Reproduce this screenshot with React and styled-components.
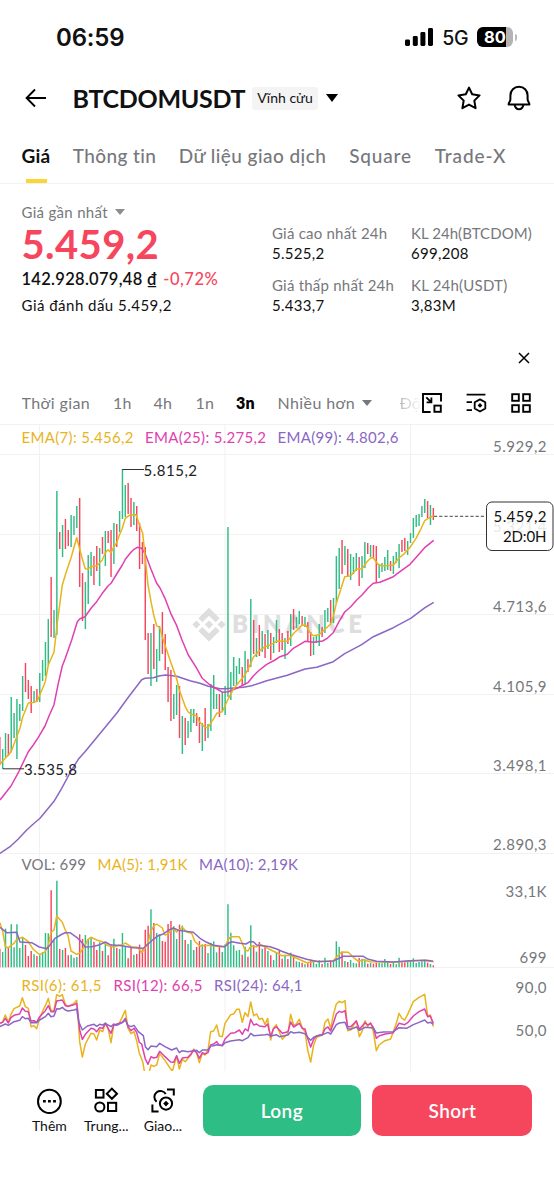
import React, { Component } from 'react'
import styled, { createGlobalStyle } from 'styled-components'

const GREEN = '#2ebd85'
const RED = '#f6465d'
const YELLOW = '#e8b41c'
const PINK = '#e040b0'
const PURPLE = '#8a67c4'

const STEP = 2.852
const FIRST_X = 2.67

// direction, high y, low y; the first candle is cut by the left edge
const CANDLES = `
r737-765 g749-769 g733-757 r734-756 g697-752 g713-738 g699-759 g704-721 g676-711 r663-692
r680-699 r686-713 g691-702 r689-702 g673-702 g660-681 g642-676 g619-665 r577-637 g610-638
g491-635 r532-549 g525-557 r519-549 r530-546 g515-547 g516-535 g506-528 r498-587 r573-621
g582-629 g555-604 g552-576 r556-585 r546-571 g548-586 r537-554 g531-566 r531-543 r530-577
g523-564 r524-547 g511-532 g469-519 g485-517 r483-514 r498-527 g502-525 r506-531 r523-569
r542-564 r547-640 r633-674 g633-686 r624-669 g649-682 g626-661 r612-654 r634-670 r667-702
r670-721 g694-719 g685-715 r686-738 g716-754 r718-745 g721-738 g709-732 g709-723 r713-726
r717-743 g723-751 r708-741 g724-738 g684-731 g675-709 g694-709 r694-717 g692-711 g686-715
g527-697 g672-700 g657-686 g666-685 g658-674 r667-686 g651-685 r659-672 g599-667 r620-654
g638-657 r625-656 g631-652 r634-658 g630-649 r633-660 g637-653 g620-643 r629-652 r633-650
g638-659 r631-644 g614-646 r609-630 g617-628 g611-624 r616-626 g617-627 r622-642 r632-656
g637-655 g635-643 g624-646 r627-637 g610-633 g608-622 r600-623 g598-623 g556-603 g548-589
r540-574 g546-565 r549-577 g554-580 g557-574 g553-571 r557-586 g556-578 g542-568 r543-554
g545-557 r545-558 r546-582 g564-578 g563-572 g557-571 g550-570 r561-571 g556-574 g552-563
g544-568 r540-552 r538-551 g541-555 g533-543 g518-538 g515-527 g514-526 g506-517 g499-513
r501-518 g505-525 r508-520
`.trim().split(/\s+/).map((item, i) => {
  const [high, low] = item.slice(1).split('-').map(Number)
  return { x: FIRST_X + (i - 1) * STEP, color: item[0] === 'g' ? GREEN : RED, high, low }
})

// bar heights in thirds of a pixel
const VOLUMES = [
  56, 46, 116, 60, 129, 60, 129, 58, 90, 67, 34, 49, 39, 34, 36, 46, 103, 102, 231, 82,
  260, 55, 52, 58, 36, 38, 29, 31, 99, 85, 97, 84, 90, 77, 52, 75, 49, 70, 36, 69,
  86, 58, 55, 103, 61, 27, 60, 38, 40, 68, 54, 113, 125, 174, 133, 103, 99, 79, 77, 130,
  139, 123, 85, 128, 125, 82, 70, 82, 52, 61, 79, 69, 70, 43, 74, 78, 45, 62, 46, 69,
  189, 104, 66, 50, 52, 38, 62, 32, 126, 67, 47, 76, 56, 65, 49, 36, 22, 43, 49, 26,
  38, 25, 44, 34, 18, 16, 14, 9, 12, 23, 18, 10, 22, 10, 29, 14, 22, 19, 78, 62,
  47, 19, 16, 22, 13, 12, 28, 26, 24, 11, 13, 11, 14, 13, 12, 25, 16, 10, 14, 9,
  29, 15, 15, 17, 20, 27, 13, 16, 18, 23, 14, 10, 6
]

const EMA7 = '0,764 11,752 16.7,737 20,728 22.7,717 28.3,703 33.3,702.5 37.3,701 45.3,681.7 48.3,665 54,652 57.3,623 62.3,585 66,572.7 71,558 76.7,537.7 81.7,556.7 85.3,568.7 88,569 91,566.7 96.7,565.7 102.3,560 105.3,552.7 108,549.7 111,552.7 113.7,547 116.7,542.7 119.3,535.3 122.3,528.3 125.3,518.3 129.3,515.3 136,514.7 139.3,524.3 142.7,533.3 145.3,558.3 148,585 151,601.7 153.7,615 156.7,625.7 160,628 162.3,636.7 165.3,646 170.7,662 176.7,679 179.3,690 182.3,698.3 185.3,706.7 188,711.7 190.7,714 196.7,716 199.3,721.7 205,727.3 208,727.7 210.7,723.3 213.7,718.7 216.7,713.3 222.3,711.7 228,699.3 233.3,689.3 239.3,681.7 245,675 249.3,666.7 253.3,657.3 258.3,651.7 265,646.7 270.7,645 276.7,641 282,641.3 287.7,641 290.7,637.3 293.7,633.3 299.3,628 302,625 306,625.3 310,632.7 313.3,635.7 319,634.7 325,629.3 330.7,624 333.3,616.7 336.7,601.7 339,595 344.7,576.7 350.7,575.7 356.7,569 362,569 366.7,562 370.7,558 373.3,557.7 377.7,564 382,566 393.3,565.3 399,558 404.7,553.3 410,547.3 416,538.3 420.7,529.3 424.7,520.7 430,517.3 433.7,516'
const EMA25 = '0,800 11,786 18.3,772.7 28.3,751.7 33.3,745 38.3,737.3 45,726 49,716 54,704.7 58.3,683.3 62.3,666 65,659 71.7,640 77.3,621.7 80,618.7 85,616.7 91,608.3 96.7,601.7 102.3,593.3 108,586 111,583.3 116.7,574 122.3,565 125.3,559.3 131,552.3 134,549.3 137.3,547.3 141.7,548.3 145.3,554 151,569.3 156.7,583.3 160,588 165,598.3 170.7,613.3 176.7,625.7 182,640 188.3,655 195.7,666.7 202.3,678.3 210,685 222.7,692.3 228.3,691.7 236.7,688.3 243.3,685 248.3,682.3 253.3,676 258.3,671 266.7,664.3 275,660 280,656.7 287.3,654.3 293.3,648.3 300,644.3 305,641.3 313.3,642.3 322.7,641 326.7,638.7 333.3,632.7 339,621.7 344.7,612 350.7,606.7 356.7,600 362,595 368.3,587.7 373.3,583.3 380,582.3 393.3,576.7 400,571.7 410,564.3 418.3,555 425,547.3 433.7,540.3'
const EMA99 = '0,853.3 10,846.7 18.3,839 26.7,830 33.3,824 40,818.3 54,801.3 61.7,788.3 71,771 78.3,759.3 85,751.7 116.7,713.3 128.3,697.3 141.7,679.7 145,678.3 153.3,677.7 160,675.7 166,675 176.7,676.3 190,680.7 200,683.3 208.3,686.3 220,688.7 225,688.7 243.3,687.3 251.7,685.7 266.7,680.7 287.3,675.3 305,669 316.7,667.3 333.3,661.7 344.7,653.7 361.7,644.7 373.3,636.7 393.3,627.7 410.7,618.3 425,607.7 433.7,602.3'
const MA5 = '0,922.7 2.7,931.7 5.3,946.7 8.3,947.7 14,943.3 16.7,939.3 22.7,937.3 28.3,941.7 33.3,949.3 39.7,954.7 45.3,951.7 48.3,945 51,932.3 54,930 56.7,916 62.3,922.3 65.3,930 68,935.3 71,951 76.7,954.3 80,952.7 85.3,945 88,939.3 91,937.3 96.7,940 102.3,941.7 108,945.7 113.7,947 119.3,945 122.3,945 125.3,943 131,946.7 136.7,947 139.3,949.3 141.7,952.7 145.3,947.7 148,942.7 151,931 153.7,926 156.7,924 162.3,928 165,935 168,934 170.7,930.3 173.7,929 176.7,932 182.3,927.3 186.7,932 191.7,933.3 195,941.7 200,946 208.3,945.3 220,946.7 225,946.7 228,940 230.7,936.7 239.3,936.7 242,942.7 245,950 248,951 250.7,946 256.7,946.7 260,944.3 263.3,945.7 268.3,948.7 276.7,952.7 281.7,955.7 290,955.3 296.7,958.3 306.7,962.7 315,961.3 333.3,961 336.7,956.7 341.7,952 348.3,952.3 353.3,957.3 358.3,961.3 363.3,959.7 370,961.7 393.3,962.3 423.3,960.3 433.3,961.7'
const MA10 = '0,927.3 6.7,932.7 16.7,932.3 20,942 31.7,942.7 39.3,947 46.7,948.7 50,945 55,938.3 62.3,934 65.3,932.7 70,932.7 76.7,937.3 81.7,942.3 85.3,947 91.7,946.7 100,944.7 105.3,942 110,944.7 121.7,945.7 133.3,947.7 143.3,948.3 151.7,940.7 158.3,935.7 163.3,934 168.3,930.3 173.3,928 178.3,930.3 193.3,932.3 200,938.3 206.7,942.3 213.3,945.3 225,946.7 228.3,943.3 231.7,941.7 240,943.3 246,944 250,941.7 253.3,941.7 256.7,945 270,946.7 276.7,949 281.7,951.3 290,954.3 306.7,959.3 318.3,961.7 333.3,961 343.3,956.3 363.3,956.3 368.3,959.3 376.7,961.3 393.3,962 410,960.7 426.7,960.3 433.3,961.3'

// oscillator lines, in thirds of a pixel
const RSI6 = '0,520 8,515 16,495 25,516 33,493 42,476 59,468 67,443 76,470 85,475 93,530 102,527 110,536 119,505 128,483 136,467 145,445 153,482 162,481 170,434 179,439 187,434 196,463 204,470 222,460 230,451 234,500 239,575 247,621 256,582 273,550 282,552 290,570 299,540 308,545 316,519 324,535 333,578 341,527 358,520 376,481 384,535 393,551 402,545 410,572 418,610 428,635 436,680 444,680 453,645 461,649 470,645 479,610 495,632 504,645 517,664 530,618 538,657 547,628 556,635 564,625 573,615 581,597 590,610 598,638 607,610 615,615 624,600 632,545 641,543 650,525 658,558 667,560 675,520 692,494 701,492 710,478 718,478 727,517 735,488 744,500 752,456 761,497 770,492 778,508 787,505 795,523 803,505 812,570 820,535 829,524 847,568 864,550 872,493 881,526 889,522 898,508 907,535 915,545 923,600 932,636 941,585 950,562 967,555 975,517 984,507 992,535 1001,490 1009,462 1018,454 1026,458 1035,452 1043,542 1052,540 1061,525 1069,512 1078,560 1086,545 1095,512 1103,530 1112,518 1120,545 1129,602 1137,585 1155,572 1172,567 1189,520 1197,490 1206,505 1214,510 1223,493 1240,455 1257,442 1274,433 1283,498 1291,495 1300,530'
const RSI12 = '0,520 8,517 16,505 25,519 33,503 42,496 59,492 67,474 76,484 85,485 93,513 102,512 110,517 119,500 136,482 145,467 153,485 162,485 170,453 187,450 196,467 204,469 222,464 230,460 234,490 239,540 247,568 256,553 273,535 282,537 290,545 299,533 308,535 316,520 333,550 341,526 358,520 367,517 376,505 384,530 393,542 402,535 410,547 418,577 425,582 436,627 444,643 453,620 461,624 470,622 479,604 495,620 512,636 521,637 530,617 538,640 547,624 564,622 573,612 581,600 590,608 598,625 607,608 615,612 624,608 632,585 641,582 650,575 658,586 667,586 675,567 692,550 705,548 718,540 727,553 735,537 744,543 752,508 761,525 770,522 778,528 795,530 803,522 812,560 820,537 829,530 838,540 847,550 864,545 872,516 881,531 898,520 907,535 915,537 923,565 932,591 941,568 950,557 967,555 975,537 984,531 992,543 1001,517 1009,492 1018,484 1026,487 1035,482 1043,530 1052,530 1069,513 1078,538 1095,518 1103,525 1112,520 1120,532 1129,565 1137,558 1155,552 1180,548 1197,520 1214,524 1223,518 1240,498 1257,485 1274,477 1283,500 1291,498 1300,520'
const RSI24 = '0,530 16,522 25,526 42,515 59,511 67,500 76,506 85,505 93,518 110,518 119,510 136,500 145,490 153,500 162,498 170,476 179,477 187,472 196,480 204,483 222,480 230,477 236,515 247,540 262,528 282,523 290,529 299,523 308,525 316,520 333,530 341,522 350,526 367,518 376,510 384,526 393,530 402,526 415,545 430,557 436,590 444,599 453,588 470,590 479,580 495,590 515,600 530,594 538,608 547,602 564,605 590,601 598,608 607,600 624,600 632,588 641,587 650,584 667,587 675,578 692,573 718,569 727,572 744,563 752,550 761,557 795,554 803,553 812,558 829,554 838,560 864,555 872,545 881,549 898,547 915,551 923,562 932,571 941,562 958,556 970,553 984,547 992,552 1001,537 1009,524 1018,519 1035,517 1043,536 1052,538 1069,531 1078,541 1095,532 1120,534 1129,549 1150,546 1180,545 1197,533 1220,535 1240,524 1257,517 1274,510 1283,519 1291,517 1300,523'

// label, baseline, width
const AXIS = [
  ['5.929,2', 452, 53.5],
  ['5.321,4', 532, 53.5],
  ['4.713,6', 611.5, 53.5],
  ['4.105,9', 691.5, 53.5],
  ['3.498,1', 771, 53.5],
  ['2.890,3', 850, 53.5],
  ['33,1K', 896.5, 41],
  ['699', 963, 27],
  ['90,0', 993, 31],
  ['50,0', 1036, 31]
]

const LEGENDS = [
  ['EMA(7): 5.456,2', 21.5, 443, 112, YELLOW],
  ['EMA(25): 5.275,2', 145, 443, 121, PINK],
  ['EMA(99): 4.802,6', 277.5, 443, 121, PURPLE],
  ['VOL: 699', 21.5, 869.5, 64.5, '#76787c'],
  ['MA(5): 1,91K', 97.5, 869.5, 90, YELLOW],
  ['MA(10): 2,19K', 199, 869.5, 99, PURPLE],
  ['RSI(6): 61,5', 21.5, 990.5, 80, YELLOW],
  ['RSI(12): 66,5', 113.5, 990.5, 89, PINK],
  ['RSI(24): 64,1', 214, 990.5, 88.5, PURPLE]
]

// name, width, letter spacing
const TABS = [
  ['Giá', 29, 0.2],
  ['Thông tin', 84, 0.4],
  ['Dữ liệu giao dịch', 148, 0.45],
  ['Square', 64, 0.8],
  ['Trade-X', 72, 0.9]
]

const PERIODS = [
  ['Thời gian', 91.5],
  ['1h', 40.5],
  ['4h', 42],
  ['1n', 40.5],
  ['3n', 41.5]
]

const Chart = () => (
  <StyleChart viewBox='0 424 554 647'>
    {[39.5, 225, 410.5].map(x => <line key={x} x1={x} x2={x} y1='424' y2='1071' stroke='#f1f1f1' />)}
    {[424.5, 454.5, 534.5, 614.5, 694.5, 773.5, 853.5, 967.5].map(y => (
      <line key={y} x1='0' x2='554' y1={y} y2={y} stroke='#f1f1f1' />
    ))}
    <g fill='#dedede'>
      <path d='M209 607.7l10.6 10.6-4 4-6.6-6.6-6.6 6.6-4-4zM196.4 620.6l4 4-4 4-4-4zM221.6 620.6l4 4-4 4-4-4zM209 620.4l4.2 4.2-4.2 4.2-4.2-4.2zM202.4 627l6.6 6.6 6.6-6.6 4 4-10.6 10.6-10.6-10.6z' />
      <StyleWatermark x='232' y='633' textLength='130'>BINANCE</StyleWatermark>
    </g>
    {AXIS.map(([label, y, width]) => (
      <StyleChartText key={label} x={546.5 - width} y={y} textLength={width} fill='#76787c'>{label}</StyleChartText>
    ))}
    {CANDLES.map(c => (
      <line key={c.x} x1={c.x} x2={c.x} y1={c.high} y2={c.low} stroke={c.color} strokeWidth='1.45' />
    ))}
    {CANDLES.map((c, i) => (
      <line key={c.x} x1={c.x} x2={c.x} y1={967.3 - VOLUMES[i] / 3} y2='967.3' stroke={c.color} strokeWidth='1.45' />
    ))}
    <StyleLine points={EMA99} stroke={PURPLE} />
    <StyleLine points={EMA25} stroke={PINK} />
    <StyleLine points={EMA7} stroke={YELLOW} />
    <StyleLine points={MA5} stroke={YELLOW} />
    <StyleLine points={MA10} stroke={PURPLE} />
    <g transform='translate(0 850) scale(0.33333)'>
      <StyleLine points={RSI6} stroke={YELLOW} />
      <StyleLine points={RSI12} stroke={PINK} />
      <StyleLine points={RSI24} stroke={PURPLE} />
    </g>
    {LEGENDS.map(([label, x, y, width, color]) => (
      <StyleChartText key={label} x={x} y={y} textLength={width} fill={color}>{label}</StyleChartText>
    ))}
    <path d='M122.5 470V469.5H144M3 768.8H24' stroke='#333' fill='none' />
    <StyleChartText x='143.5' y='475.5' textLength='53.5' fill='#202226'>5.815,2</StyleChartText>
    <StyleChartText x='24' y='775' textLength='53' fill='#202226'>3.535,8</StyleChartText>
    <path d='M434 516.3H486' stroke='#444' strokeDasharray='3.2 2' />
    <rect x='486.5' y='502' width='66.5' height='48.5' rx='5.5' fill='#fff' fillOpacity='0.82' stroke='#333' />
    <StyleChartText x='493.5' y='522' textLength='53' fill='#111'>5.459,2</StyleChartText>
    <StyleChartText x='503' y='541.8' textLength='43.5' fill='#111'>2D:0H</StyleChartText>
  </StyleChart>
)

class App extends Component {
  constructor (props) {
    super(props)
    this.state = {
      tab: 'Giá',
      period: '3n'
    }
  }

  handleTab = (tab) => {
    this.setState({ tab })
  }

  handlePeriod = (period) => {
    this.setState({ period })
  }

  render () {
    const { tab, period } = this.state
    return (
      <StylePage>
        <GlobalStyle />
        <StyleStatusBar>
          <StyleClock>06:59</StyleClock>
          <StyleSignal>
            <svg width='28' height='20' viewBox='0 0 28 20'>
              <rect x='0' y='12.5' width='5' height='6.5' rx='1.4' />
              <rect x='7.8' y='9' width='5' height='10' rx='1.4' />
              <rect x='15.4' y='5' width='5' height='14' rx='1.4' />
              <rect x='23' y='1' width='5' height='18' rx='1.4' />
            </svg>
            <StyleNetwork>5G</StyleNetwork>
            <StyleBattery>80</StyleBattery>
            <StyleBatteryTip />
          </StyleSignal>
        </StyleStatusBar>

        <StyleHeader>
          <svg width='22' height='20' viewBox='0 0 22 20' fill='none' stroke='#000' strokeWidth='1.9'>
            <path d='M21 10H1.8M10 1.5L1.6 10L10 18.5' />
          </svg>
          <StyleSymbol>BTCDOMUSDT</StyleSymbol>
          <StyleBadge>Vĩnh cửu</StyleBadge>
          <StyleCaret $size={6.5} $color='#000' />
          <StyleHeaderIcons>
            <svg width='26' height='26' viewBox='0 0 26 26' fill='none' stroke='#000' strokeWidth='2' strokeLinejoin='round'>
              <path d='M13 2.6L16.2 9.3L23.6 10.4L18.3 15.6L19.6 23.2L13 19.6L6.4 23.2L7.7 15.6L2.4 10.4L9.8 9.3Z' />
            </svg>
            <svg width='26' height='26' viewBox='0 0 26 26' fill='none' stroke='#000' strokeWidth='2'>
              <path d='M2.6 19.6C2.6 16.8 4.4 17.2 4.4 14V10.4C4.4 5.4 8 1.7 13 1.7S21.6 5.4 21.6 10.4V14C21.6 17.2 23.4 16.8 23.4 19.6Z' strokeLinejoin='round' />
              <path d='M8.7 20C9.2 22.8 10.8 24.3 13 24.3S16.8 22.8 17.3 20' />
            </svg>
          </StyleHeaderIcons>
        </StyleHeader>

        <StyleTabs>
          {TABS.map(([name, width, space]) => (
            <StyleTab
              key={name}
              $width={width}
              $space={space}
              $active={tab === name}
              onClick={() => this.handleTab(name)}
            >
              {name}
            </StyleTab>
          ))}
        </StyleTabs>

        <StyleTicker>
          <StylePriceColumn>
            <StyleLabel>Giá gần nhất <StyleCaret $size={5.2} $color='#8b8d91' /></StyleLabel>
            <StylePrice>5.459,2</StylePrice>
            <StyleFiat>142.928.079,48 ₫ <StyleChange>-0,72%</StyleChange></StyleFiat>
            <StyleMark>Giá đánh dấu 5.459,2</StyleMark>
          </StylePriceColumn>
          <StyleStats>
            <StyleStat>
              <StyleStatName>Giá cao nhất 24h</StyleStatName>
              <StyleStatValue>5.525,2</StyleStatValue>
            </StyleStat>
            <StyleStat>
              <StyleStatName $space={0.05}>KL 24h(BTCDOM)</StyleStatName>
              <StyleStatValue>699,208</StyleStatValue>
            </StyleStat>
            <StyleStat>
              <StyleStatName>Giá thấp nhất 24h</StyleStatName>
              <StyleStatValue>5.433,7</StyleStatValue>
            </StyleStat>
            <StyleStat>
              <StyleStatName>KL 24h(USDT)</StyleStatName>
              <StyleStatValue>3,83M</StyleStatValue>
            </StyleStat>
          </StyleStats>
        </StyleTicker>

        <StyleCloseRow>
          <svg width='12' height='12' viewBox='0 0 12 12' fill='none' stroke='#000' strokeWidth='1.5'>
            <path d='M1 1L11 11M11 1L1 11' />
          </svg>
        </StyleCloseRow>

        <StyleToolbar>
          <StylePeriods>
            {PERIODS.map(([name, width]) => (
              <StylePeriod key={name} $width={width} $active={period === name} onClick={() => this.handlePeriod(name)}>
                {name}
              </StylePeriod>
            ))}
            <StylePeriod $width={122}>Nhiều hơn <StyleCaret $size={5.2} $color='#76787c' /></StylePeriod>
            <StyleFaded>Độ</StyleFaded>
          </StylePeriods>
          <StyleTools>
            <svg width='20' height='20' viewBox='0 0 20 20' fill='none' stroke='#000' strokeWidth='1.9'>
              <path d='M8.6 19H1V1H19V8.6' />
              <rect x='12.4' y='12.6' width='6.4' height='6.2' />
              <path d='M4.3 4.3L9 9M9.4 4.6V9.4H4.6' strokeWidth='1.8' />
            </svg>
            <svg width='21' height='20' viewBox='0 0 21 20' fill='none' stroke='#000' strokeWidth='1.8'>
              <path d='M0.6 1.6H19.4M0.6 9.2H6M0.6 17.2H6' />
              <path d='M14 6.4L19.3 9.3V15.5L14 18.5L8.7 15.5V9.3Z' strokeLinejoin='round' />
              <path d='M14 10L16.4 12.4L14 14.8L11.6 12.4Z' fill='#000' stroke='none' />
            </svg>
            <svg width='20' height='20' viewBox='0 0 20 20' fill='none' stroke='#000' strokeWidth='1.9'>
              <rect x='1.2' y='1.2' width='6.6' height='6.6' />
              <rect x='12.2' y='1.2' width='6.6' height='6.6' />
              <rect x='1.2' y='12.2' width='6.6' height='6.6' />
              <rect x='12.2' y='12.2' width='6.6' height='6.6' />
            </svg>
          </StyleTools>
        </StyleToolbar>

        <Chart />

        <StyleFooter>
          <StyleAction>
            <svg width='26' height='28' viewBox='0 0 26 28' fill='none' stroke='#000' strokeWidth='2'>
              <ellipse cx='13.4' cy='14.4' rx='11.4' ry='11.7' />
              <path d='M7 14.2H9.8M12 14.2H14.8M17.1 14.2H19.9' strokeWidth='2.6' />
            </svg>
            Thêm
          </StyleAction>
          <StyleAction>
            <svg width='26' height='28' viewBox='0 0 26 28' fill='none' stroke='#000' strokeWidth='2'>
              <rect x='2.9' y='3' width='7.6' height='7.6' />
              <path d='M18.9 1.6L24 6.7L18.9 11.8L13.8 6.7Z' />
              <circle cx='6.8' cy='20' r='4.6' />
              <rect x='15' y='15.8' width='8.2' height='8.2' />
            </svg>
            Trung...
          </StyleAction>
          <StyleAction>
            <svg width='26' height='28' viewBox='0 0 26 28' fill='none' stroke='#000' strokeWidth='2'>
              <path d='M17 2.4H23.8V8.6M2.4 17.4V24.4H8.6' />
              <path d='M6.6 14.8C3.5 12 3.7 7.6 6.7 5.2C9.8 2.9 14 4 15.7 7' />
              <circle cx='16' cy='16.6' r='6.1' />
              <path d='M16 13.8L18.8 16.6L16 19.4L13.2 16.6Z' fill='#000' stroke='none' />
            </svg>
            Giao...
          </StyleAction>
          <StyleTradeButton $color={GREEN} $width={158}>Long</StyleTradeButton>
          <StyleTradeButton $color={RED} $width={160}>Short</StyleTradeButton>
        </StyleFooter>
      </StylePage>
    )
  }
}

export default App

const GlobalStyle = createGlobalStyle`
body{
  margin: 0;
  background: #fff;
}
`
const StylePage = styled.div`
width: 554px;
height: 1199px;
overflow: hidden;
background: #fff;
color: #111;
font-family: Lato, "Noto Sans", sans-serif;
svg{
  display: block;
  flex: none;
}
`
const StyleStatusBar = styled.div`
box-sizing: border-box;
height: 74px;
padding: 0 37.5px 0 56px;
display: flex;
align-items: center;
justify-content: space-between;
font-family: Inter, sans-serif;
`
const StyleClock = styled.div`
font-size: 24px;
font-weight: 600;
letter-spacing: -0.2px;
`
const StyleSignal = styled.div`
display: flex;
align-items: center;
`
const StyleNetwork = styled.span`
margin: 1px 9px 0 9px;
font-size: 19.5px;
font-weight: 500;
letter-spacing: -0.5px;
`
const StyleBattery = styled.span`
width: 36px;
height: 20px;
line-height: 20px;
border-radius: 6px;
text-align: center;
font-size: 16.5px;
font-weight: 700;
color: #fff;
background: linear-gradient(90deg, #000 80%, #b4b4b4 80%);
`
const StyleBatteryTip = styled.span`
width: 2px;
height: 7px;
margin-left: 1.5px;
border-radius: 0 2px 2px 0;
background: #bbb;
`
const StyleHeader = styled.header`
box-sizing: border-box;
height: 48px;
padding: 0 22.5px 0 25px;
display: flex;
align-items: center;
`
const StyleSymbol = styled.h1`
width: 172px;
margin: -1px 7.5px 0 25.5px;
font-size: 25px;
font-weight: 700;
letter-spacing: -0.3px;
white-space: nowrap;
`
const StyleBadge = styled.span`
width: 66px;
height: 23px;
margin-right: 8px;
line-height: 22px;
border-radius: 3px;
background: #f4f4f4;
text-align: center;
font-size: 14px;
white-space: nowrap;
`
const StyleCaret = styled.i`
display: inline-block;
border: ${p => p.$size}px solid transparent;
border-top: ${p => p.$size * 1.3}px solid ${p => p.$color};
border-bottom: 0;
`
const StyleHeaderIcons = styled.div`
display: flex;
gap: 24px;
margin-left: auto;
`
const StyleTabs = styled.nav`
box-sizing: border-box;
height: 62px;
padding-left: 21.5px;
display: flex;
gap: 22px;
border-bottom: 1px solid #f2f2f2;
`
const StyleTab = styled.div`
width: ${p => p.$width}px;
display: flex;
flex-direction: column;
align-items: center;
justify-content: space-between;
padding-top: 22px;
line-height: 24px;
font-size: 19px;
letter-spacing: ${p => p.$space}px;
font-weight: ${p => p.$active ? 700 : 500};
color: ${p => p.$active ? '#111' : '#76787c'};
white-space: nowrap;
&::after{
  content: '';
  width: 21px;
  height: 4px;
  background: ${p => p.$active ? '#fcd535' : 'transparent'};
}
`
const StyleTicker = styled.section`
box-sizing: border-box;
height: 156px;
display: flex;
padding: 17px 0 0 21.5px;
white-space: nowrap;
`
const StylePriceColumn = styled.div`
width: 250.5px;
`
const StyleLabel = styled.div`
display: flex;
align-items: center;
gap: 7px;
height: 22px;
font-size: 15px;
letter-spacing: 0.3px;
color: #76787c;
`
const StylePrice = styled.div`
height: 44px;
line-height: 43px;
font-size: 40px;
font-weight: 700;
letter-spacing: 0.4px;
color: #f6465d;
`
const StyleFiat = styled.div`
height: 24px;
line-height: 24px;
font-size: 16.5px;
font-weight: 600;
letter-spacing: 0.3px;
`
const StyleChange = styled.span`
margin-left: 1.5px;
font-weight: 500;
letter-spacing: 0.5px;
color: #f6465d;
`
const StyleMark = styled.div`
height: 29px;
line-height: 29px;
font-size: 15px;
letter-spacing: 0.48px;
`
const StyleStats = styled.div`
display: grid;
grid-template-columns: 139px 130px;
grid-auto-rows: 52px;
padding-top: 21.5px;
`
const StyleStat = styled.div`
font-size: 15px;
line-height: 20.5px;
`
const StyleStatName = styled.div`
letter-spacing: ${p => p.$space ?? 0.22}px;
color: #76787c;
`
const StyleStatValue = styled.div`
letter-spacing: 0.3px;
color: #111;
`
const StyleCloseRow = styled.div`
height: 35px;
padding-right: 24px;
display: flex;
align-items: center;
justify-content: flex-end;
`
const StyleToolbar = styled.div`
box-sizing: border-box;
height: 49px;
padding: 7px 23px 0 21.5px;
display: flex;
align-items: center;
justify-content: space-between;
`
const StylePeriods = styled.div`
display: flex;
width: 400px;
overflow: hidden;
white-space: nowrap;
`
const StylePeriod = styled.div`
flex: none;
display: flex;
align-items: center;
gap: 7px;
width: ${p => p.$width}px;
font-size: 16px;
line-height: 24px;
letter-spacing: ${p => p.$width > 50 ? 0.4 : 0.1}px;
font-weight: ${p => p.$active ? 800 : 400};
color: ${p => p.$active ? '#000' : '#76787c'};
`
const StyleFaded = styled.span`
font-size: 16px;
line-height: 24px;
color: transparent;
background: linear-gradient(90deg, #bbb, #fafafa);
background-clip: text;
`
const StyleTools = styled.div`
display: flex;
gap: 24px;
`
const StyleChart = styled.svg`
width: 554px;
height: 647px;
`
const StyleChartText = styled.text`
font-size: 15px;
`
const StyleWatermark = styled.text`
font-size: 24px;
font-weight: 800;
`
const StyleLine = styled.polyline`
fill: none;
stroke-width: 1.5;
stroke-linejoin: round;
vector-effect: non-scaling-stroke;
`
const StyleFooter = styled.footer`
height: 79px;
padding-left: 21px;
display: flex;
align-items: center;
`
const StyleAction = styled.div`
width: 56.8px;
height: 48px;
display: flex;
flex-direction: column;
align-items: center;
justify-content: space-between;
font-size: 14px;
line-height: 18px;
`
const StyleTradeButton = styled.button`
width: ${p => p.$width}px;
height: 51px;
margin-left: 11.5px;
padding: 0;
border: none;
border-radius: 10px;
background: ${p => p.$color};
color: #fff;
font-family: inherit;
font-size: 19px;
font-weight: 600;
letter-spacing: 0.4px;
`
